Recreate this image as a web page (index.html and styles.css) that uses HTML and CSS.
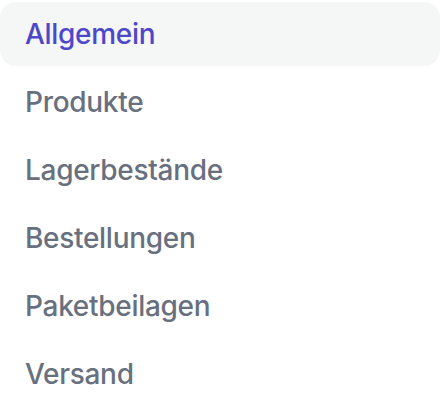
FILE: index.html
```html
<!DOCTYPE html>
<html lang="de">
<head>
<meta charset="utf-8">
<link rel="stylesheet" href="styles.css">
</head>
<body>
<nav class="nav">
  <a class="item active" href="#">Allgemein</a>
  <a class="item" href="#">Produkte</a>
  <a class="item" href="#">Lagerbestände</a>
  <a class="item" href="#">Bestellungen</a>
  <a class="item" href="#">Paketbeilagen</a>
  <a class="item" href="#">Versand</a>
</nav>
</body>
</html>
```
FILE: styles.css
```css
html, body {
  margin: 0;
  padding: 0;
  background: #ffffff;
}
body {
  font-family: Inter, "Noto Sans", sans-serif;
  -webkit-font-smoothing: antialiased;
}
.nav {
  display: flex;
  flex-direction: column;
  gap: 4px;
  padding-top: 2px;
}
.item {
  display: block;
  height: 64px;
  line-height: 64px;
  padding: 0 25px;
  border-radius: 16px;
  font-size: 28px;
  font-weight: 500;
  letter-spacing: -0.3px;
  color: #687080;
  text-decoration: none;
}
.item.active {
  background: #f5f6f6;
  color: #4d47c9;
}
```
